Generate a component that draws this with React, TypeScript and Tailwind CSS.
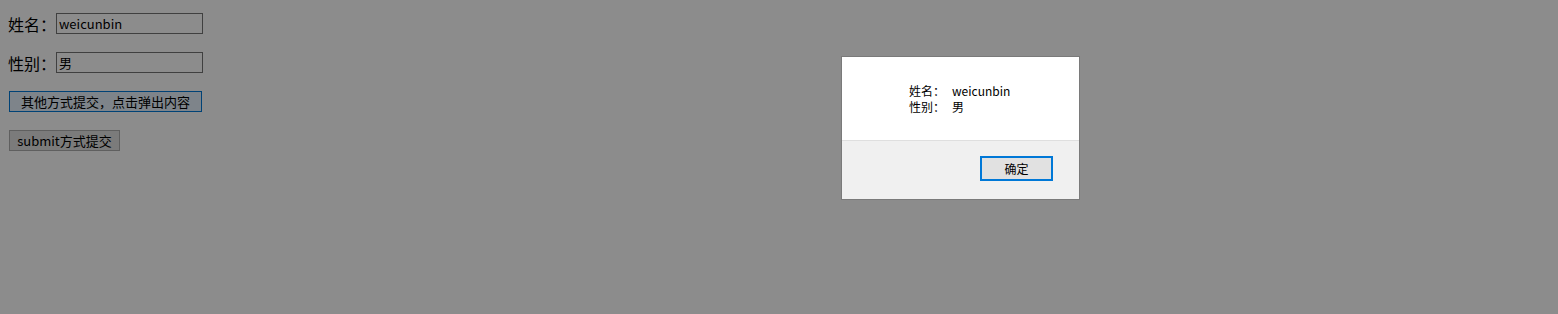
export default function App() {
  const font = { fontFamily: '"Noto Sans CJK SC", "Noto Sans", sans-serif' };

  return (
    <div className="relative w-[1558px] h-[314px] bg-white text-black overflow-hidden" style={font}>
      {/* Form */}
      <div className="flex flex-col gap-[18px] pt-[13px] pl-2">
        <div className="flex items-center h-[21px]">
          <span className="text-[16px] leading-none w-12">姓名：</span>
          <input
            readOnly
            value="weicunbin"
            className="w-[147px] h-[21px] border border-[#767676] bg-white px-[2px] text-[13px] text-black outline-none"
          />
        </div>
        <div className="flex items-center h-[21px]">
          <span className="text-[16px] leading-none w-12">性别：</span>
          <input
            readOnly
            value="男"
            className="w-[147px] h-[21px] border border-[#767676] bg-white px-[2px] text-[13px] text-black outline-none"
          />
        </div>
        <div className="flex h-[21px]">
          <button className="ml-px w-[193px] h-[21px] border border-[#0078d7] bg-[#e5f1fb] text-[13px] leading-none">
            其他方式提交，点击弹出内容
          </button>
        </div>
        <div className="flex h-[21px]">
          <button className="ml-px w-[111px] h-[21px] border border-[#adadad] bg-[#e1e1e1] text-[13px] leading-none">
            submit方式提交
          </button>
        </div>
      </div>

      {/* Overlay */}
      <div className="absolute inset-0 bg-black/45" />

      {/* Alert dialog */}
      <div className="absolute left-[841px] top-[56px] w-[239px] h-[144px] border border-[#7a7a7a] bg-[#f0f0f0] flex flex-col">
        <div className="h-[84px] bg-white border-b border-[#dfdfdf] pt-[26px] pl-[67px] text-[12px] leading-[16px]">
          <div className="flex">
            <span className="w-[43px]">姓名：</span>
            <span>weicunbin</span>
          </div>
          <div className="flex">
            <span className="w-[43px]">性别：</span>
            <span>男</span>
          </div>
        </div>
        <div className="flex justify-end pt-[15px] pr-[26px]">
          <button className="w-[73px] h-[25px] border-2 border-[#0078d7] bg-[#e1e1e1] text-[12px] leading-none">
            确定
          </button>
        </div>
      </div>
    </div>
  );
}
